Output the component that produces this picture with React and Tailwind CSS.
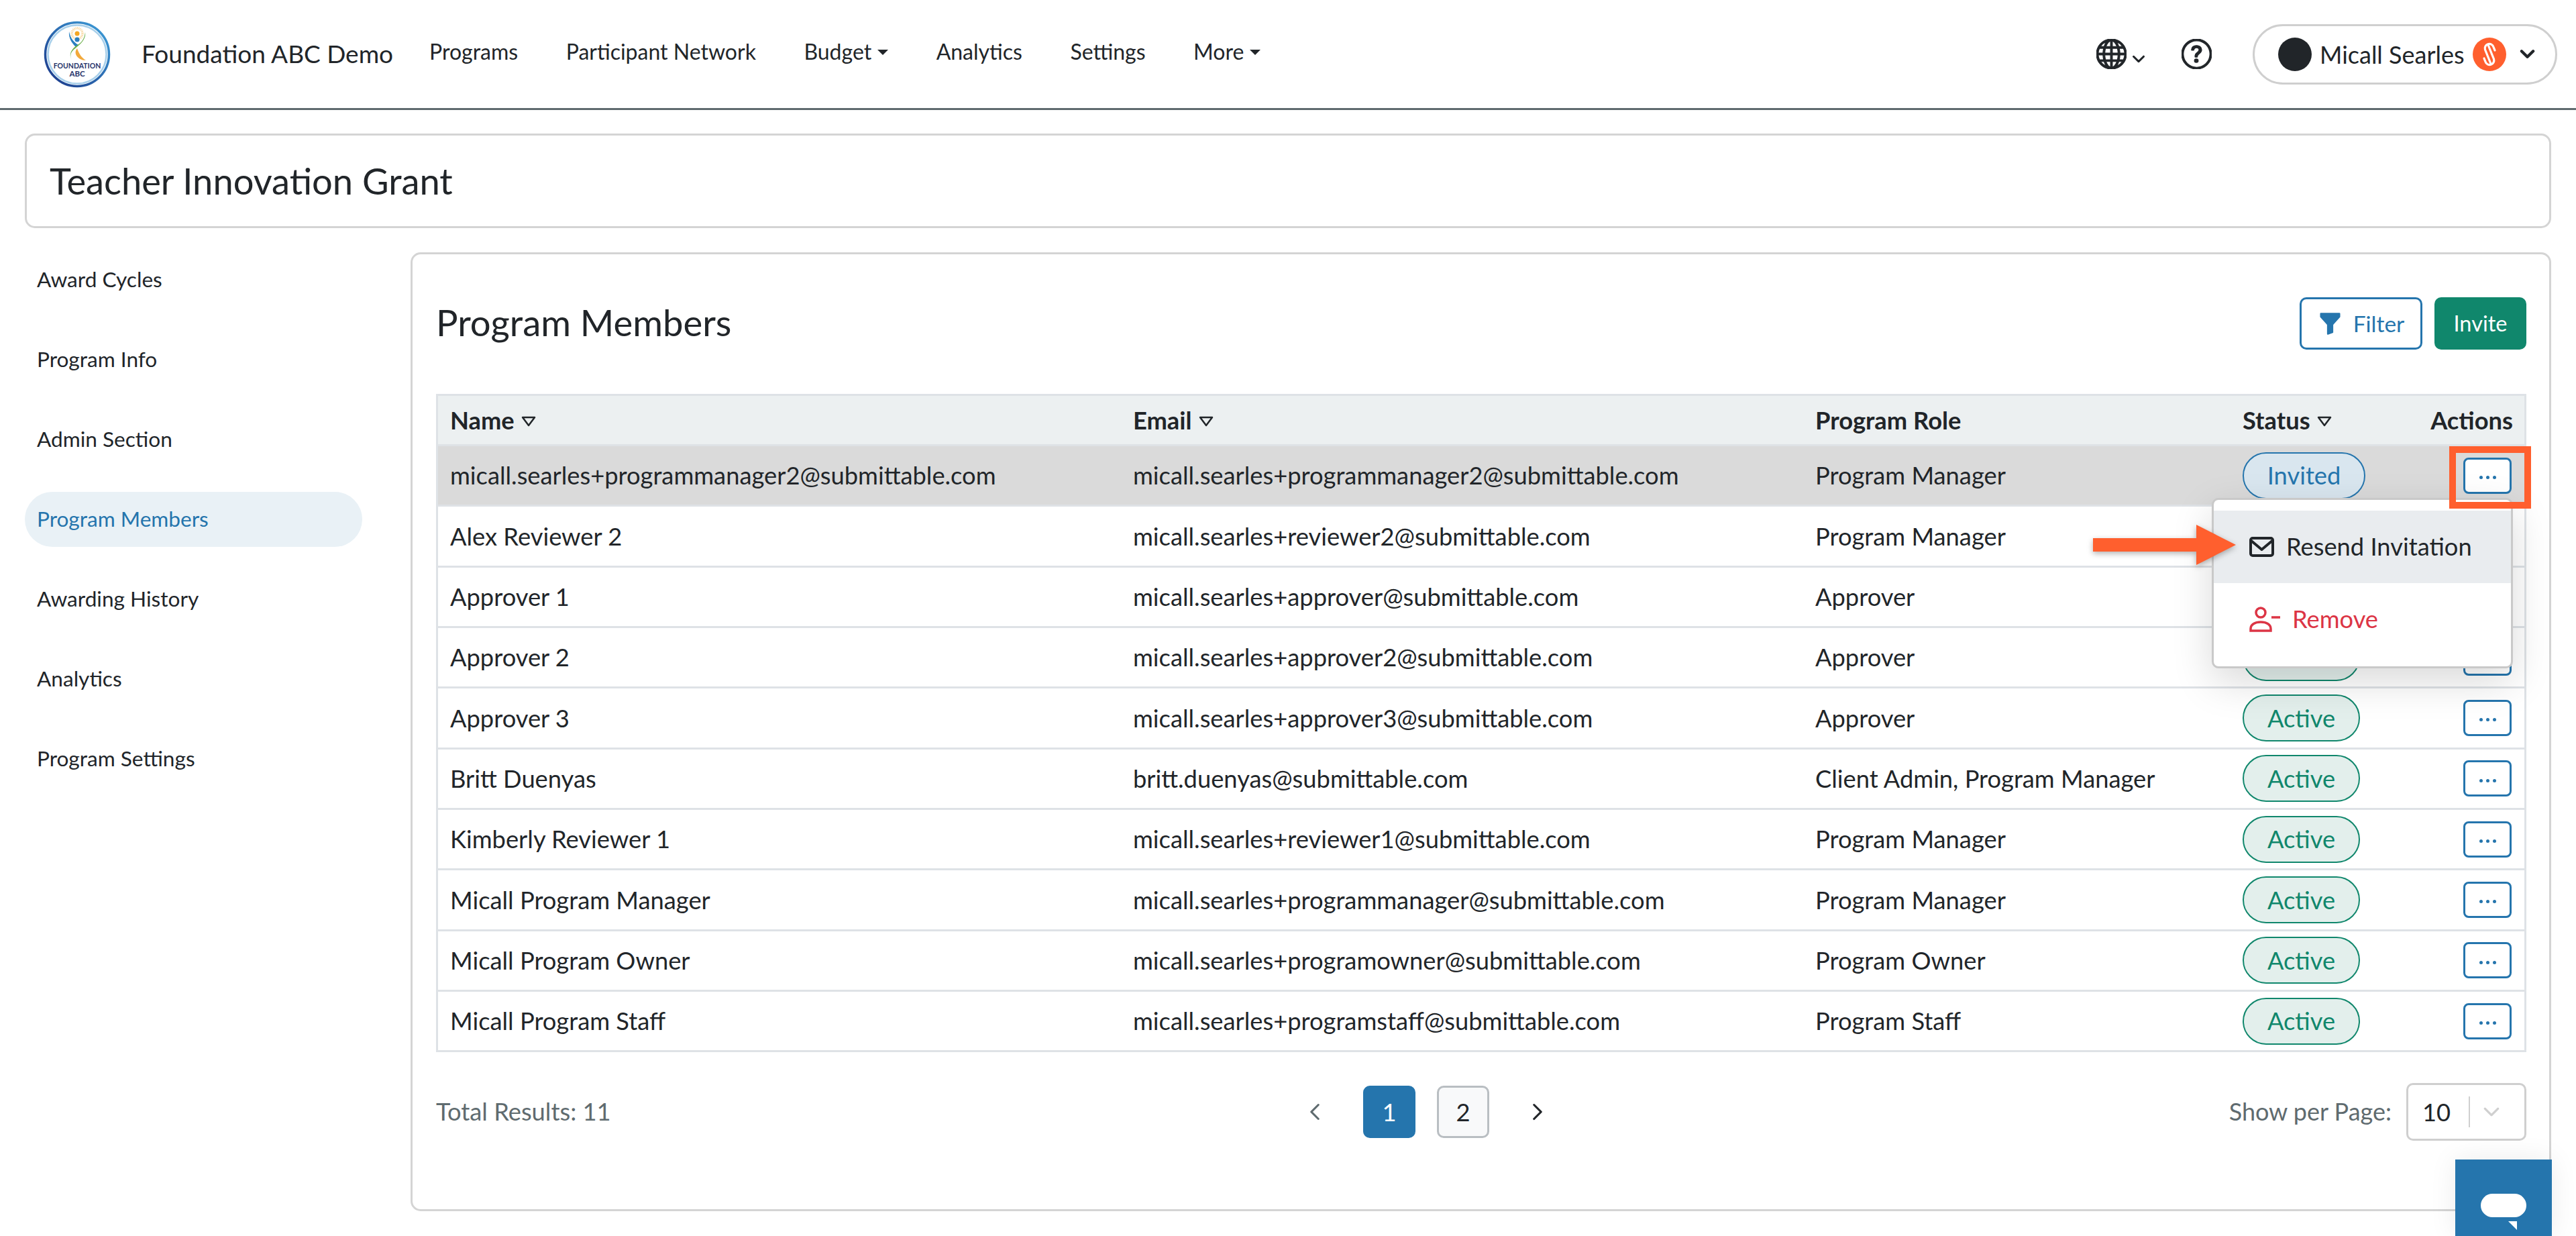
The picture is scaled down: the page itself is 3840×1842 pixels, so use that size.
import React from 'react';
import { BsGlobe, BsQuestionCircle, BsChevronDown, BsChevronLeft, BsChevronRight, BsFunnelFill } from 'react-icons/bs';

const sideLinks = ['Award Cycles', 'Program Info', 'Admin Section', 'Program Members', 'Awarding History', 'Analytics', 'Program Settings'];

const members = [
  ['micall.searles+programmanager2@submittable.com', 'micall.searles+programmanager2@submittable.com', 'Program Manager', 'Invited'],
  ['Alex Reviewer 2', 'micall.searles+reviewer2@submittable.com', 'Program Manager', 'Active'],
  ['Approver 1', 'micall.searles+approver@submittable.com', 'Approver', 'Active'],
  ['Approver 2', 'micall.searles+approver2@submittable.com', 'Approver', 'Active'],
  ['Approver 3', 'micall.searles+approver3@submittable.com', 'Approver', 'Active'],
  ['Britt Duenyas', 'britt.duenyas@submittable.com', 'Client Admin, Program Manager', 'Active'],
  ['Kimberly Reviewer 1', 'micall.searles+reviewer1@submittable.com', 'Program Manager', 'Active'],
  ['Micall Program Manager', 'micall.searles+programmanager@submittable.com', 'Program Manager', 'Active'],
  ['Micall Program Owner', 'micall.searles+programowner@submittable.com', 'Program Owner', 'Active'],
  ['Micall Program Staff', 'micall.searles+programstaff@submittable.com', 'Program Staff', 'Active'],
];

const columns = 'grid grid-cols-[1018px_1017px_637px_281px_1fr] items-center';

function SortIcon() {
  return (
    <svg width="22" height="16" viewBox="0 0 22 16" className="ml-[10px] mt-[3px]">
      <path d="M2 2h18l-9 12z" fill="none" stroke="#212529" strokeWidth="2.5" strokeLinejoin="round" />
    </svg>
  );
}

function Logo() {
  return (
    <svg width="100" height="100" viewBox="0 0 100 100" className="shrink-0">
      <defs>
        <linearGradient id="ring" x1="0.9" y1="0.1" x2="0.1" y2="0.9">
          <stop offset="0" stopColor="#3b97d3" />
          <stop offset="1" stopColor="#1d3f8f" />
        </linearGradient>
      </defs>
      <circle cx="50" cy="50" r="47.5" fill="none" stroke="url(#ring)" strokeWidth="3.5" />
      <circle cx="50" cy="50" r="43.5" fill="none" stroke="#a9d0ea" strokeWidth="2.5" />
      <circle cx="50" cy="19" r="3.5" fill="#f5a623" />
      <circle cx="50" cy="19" r="8" fill="none" stroke="#f8cf8a" strokeWidth="3.5" strokeDasharray="1 1.2" />
      <circle cx="50" cy="28" r="3.5" fill="#2a7fc0" />
      <path d="M38 16C37 26 42 33 48 39L52 36C45 32 40 26 38 16z" fill="#2a7fc0" />
      <path d="M50 41C53 50 57 55 63 59 56 59 52 56 49 52 47 48 47 45 50 41z" fill="#f2a93b" />
      <path d="M62 17C64 30 50 38 44 44 40 48 39 53 42 58 36 48 44 40 52 35 58 31 61 25 62 17z" fill="#6bb04a" />
      <text x="50" y="71" textAnchor="middle" fontSize="10.5" fontWeight="700" fill="#27346b" fontFamily="Lato, sans-serif">FOUNDATION</text>
      <text x="50" y="83" textAnchor="middle" fontSize="11.5" fontWeight="700" fill="#27346b" fontFamily="Lato, sans-serif">ABC</text>
    </svg>
  );
}

function BrandBadge() {
  return (
    <span className="w-[50px] h-[50px] rounded-full bg-[#ff5f2e] flex items-center justify-center">
      <svg width="22" height="38" viewBox="0 0 22 38" fill="none" stroke="#fff" strokeWidth="3.2" strokeLinecap="round">
        <path d="M13 33L4.5 12a6.5 6.5 0 0 1 12.5-4l2 5" />
        <path d="M9 5l8.5 21a6.5 6.5 0 0 1-12.5 4l-2-5" />
      </svg>
    </span>
  );
}

function Dots() {
  return (
    <button className="w-[72px] h-[54px] rounded-[8px] border-[3px] border-[#2575ad] bg-white flex items-center justify-center gap-[5px] pt-[6px]">
      <span className="w-[5px] h-[5px] rounded-full bg-[#2575ad]" />
      <span className="w-[5px] h-[5px] rounded-full bg-[#2575ad]" />
      <span className="w-[5px] h-[5px] rounded-full bg-[#2575ad]" />
    </button>
  );
}

function StatusPill({ status }) {
  if (status === 'Invited') {
    return (
      <span className="w-[183px] h-[70px] rounded-[35px] border-2 border-[#2575ad] bg-[#d9e6ef] text-[#2575ad] flex items-center justify-center">
        Invited
      </span>
    );
  }
  return (
    <span className="w-[175px] h-[70px] rounded-[35px] border-2 border-[#10876c] bg-[#e3efec] text-[#10876c] flex items-center justify-center">
      Active
    </span>
  );
}

function MemberRow({ member, index }) {
  const [name, email, role, status] = member;
  return (
    <div className={`${columns} h-[90.33px] border-b-[3px] border-[#dee2e6] ${index === 0 ? 'bg-[#dadada]' : 'bg-white'}`}>
      <div className="pl-[18px] whitespace-nowrap">{name}</div>
      <div className="pl-[18px] whitespace-nowrap">{email}</div>
      <div className="pl-[18px] whitespace-nowrap">{role}</div>
      <div className="pl-[18px]"><StatusPill status={status} /></div>
      <div className="flex justify-end pr-[19px]"><Dots /></div>
    </div>
  );
}

export default function App() {
  return (
    <div className="relative w-[3840px] h-[1842px] overflow-hidden bg-white text-[#212529] text-[36.3px] font-['Lato',sans-serif]">
      <header className="h-[164px] border-b-[3px] border-[#5f6b6f] flex items-center pl-[65px] pr-[28px]">
        <Logo />
        <span className="ml-[46px] text-[37px] mt-[-2px] whitespace-nowrap">Foundation ABC Demo</span>
        <nav className="flex items-center ml-[54px] mt-[-8px] gap-[71.5px] text-[32px]">
          <a>Programs</a>
          <a>Participant Network</a>
          <a className="flex items-center">Budget<span className="ml-[9px] mt-[3px] border-x-[8px] border-x-transparent border-t-[8px] border-t-[#212529]" /></a>
          <a>Analytics</a>
          <a>Settings</a>
          <a className="flex items-center">More<span className="ml-[9px] mt-[3px] border-x-[8px] border-x-transparent border-t-[8px] border-t-[#212529]" /></a>
        </nav>
        <div className="ml-auto flex items-center">
          <BsGlobe className="w-[45px] h-[45px]" strokeWidth="0.4" />
          <BsChevronDown className="w-[20px] h-[20px] ml-[8px] mt-[14px]" strokeWidth="1.5" />
          <BsQuestionCircle className="w-[45px] h-[45px] ml-[54px]" strokeWidth="0.4" />
          <div className="ml-[61px] w-[454px] h-[90px] rounded-[45px] border-[3px] border-[#cfcfcf] flex items-center pl-[35px]">
            <span className="w-[50px] h-[50px] rounded-full bg-[#212529]" />
            <span className="ml-[12px] text-[36px] whitespace-nowrap">Micall Searles</span>
            <span className="ml-[12px]"><BrandBadge /></span>
            <BsChevronDown className="w-[23px] h-[23px] ml-[20px]" strokeWidth="2" />
          </div>
        </div>
      </header>

      <div className="px-[37px]">
        <div className="mt-[35px] h-[141px] rounded-[15px] border-[3px] border-[#d4d4d4] flex items-center pl-[34px] text-[54.25px]">
          Teacher Innovation Grant
        </div>

        <div className="mt-[36px] flex">
          <aside className="w-[503px] flex flex-col gap-[37px] text-[31.6px]">
            {sideLinks.map((link) => (
              <div key={link} className={`h-[82px] rounded-[41px] flex items-center pl-[18px] ${link === 'Program Members' ? 'bg-[#e9f1f6] text-[#2575ad]' : ''}`}>
                {link}
              </div>
            ))}
          </aside>

          <main className="ml-[72px] w-[3191px] h-[1429px] rounded-[15px] border-[3px] border-[#d4d4d4] pl-[35px] pr-[34px] pt-[64px]">
            <div className="flex items-center h-[78px]">
              <h1 className="text-[54.4px] mt-[-2px]">Program Members</h1>
              <button className="ml-auto w-[183px] h-[78px] rounded-[10px] border-[3px] border-[#2575ad] text-[#2575ad] text-[33.5px] flex items-center justify-center gap-[16px]">
                <BsFunnelFill className="w-[37px] h-[37px]" />
                Filter
              </button>
              <button className="ml-[18px] w-[137px] h-[78px] rounded-[10px] bg-[#10876c] text-white text-[32.5px] flex items-center justify-center">
                Invite
              </button>
            </div>

            <div className="mt-[66px] border-x-[3px] border-[#dee2e6] w-[3116px]">
              <div className={`${columns} h-[78px] bg-[#ecf0f1] border-y-[3px] border-[#dee2e6] font-bold`}>
                <div className="pl-[18px] flex items-center">Name<SortIcon /></div>
                <div className="pl-[18px] flex items-center">Email<SortIcon /></div>
                <div className="pl-[18px]">Program Role</div>
                <div className="pl-[18px] flex items-center">Status<SortIcon /></div>
                <div className="text-right pr-[17px]">Actions</div>
              </div>
              {members.map((member, i) => (
                <MemberRow key={i} member={member} index={i} />
              ))}
            </div>

            <div className="mt-[46px] flex items-center h-[86px] w-[3116px]">
              <span className="w-[1296px] text-[#5f6b6f] mt-[-2px]">Total Results: 11</span>
              <BsChevronLeft className="w-[28px] h-[28px] text-[#5f6b6f]" strokeWidth="0.8" />
              <span className="ml-[58px] w-[78px] h-[78px] rounded-[10px] bg-[#2575ad] text-white flex items-center justify-center">1</span>
              <span className="ml-[32px] w-[78px] h-[78px] rounded-[10px] bg-[#f8f9fa] border-[3px] border-[#b9bec2] flex items-center justify-center">2</span>
              <BsChevronRight className="ml-[58px] w-[28px] h-[28px]" strokeWidth="0.8" />
              <span className="ml-auto text-[#5f6b6f] text-[36px] mt-[-2px]">Show per Page:</span>
              <div className="ml-[22px] w-[179px] h-[86px] rounded-[10px] border-[3px] border-[#cfcfcf] flex items-center">
                <span className="w-[92px] pl-[21px] border-r-2 border-[#cfcfcf] leading-[46px]">10</span>
                <BsChevronDown className="ml-[19px] w-[26px] h-[26px] text-[#cfcfcf]" strokeWidth="1" />
              </div>
            </div>
          </main>
        </div>
      </div>

      {/* action menu */}
      <div className="absolute left-[3297px] top-[742px] w-[449px] h-[254px] bg-white rounded-[10px] border-[3px] border-[#c9c9c9] shadow-[0_20px_60px_rgba(0,0,0,0.15)] pt-[16px]">
        <div className="h-[108px] bg-[#e9ecef] flex items-center pl-[53px]">
          <svg width="37" height="30" viewBox="0 0 37 30" fill="none" stroke="#212529" strokeWidth="4" strokeLinejoin="round">
            <rect x="2" y="2" width="33" height="26" rx="3" />
            <path d="M3 6l15.5 13L34 6" />
          </svg>
          <span className="ml-[18px] mt-[-2px]">Resend Invitation</span>
        </div>
        <div className="h-[108px] flex items-center pl-[53px] text-[#dc3545]">
          <svg width="46" height="38" viewBox="0 0 46 38" fill="none" stroke="#dc3545" strokeWidth="3.5">
            <circle cx="17" cy="9" r="7" />
            <path d="M2 36v-3c0-6 6-10 15-10s15 4 15 10v3z" />
            <path d="M33 16h13" />
          </svg>
          <span className="ml-[18px] mt-[-2px]">Remove</span>
        </div>
      </div>

      {/* annotation */}
      <div className="absolute left-[3651px] top-[665px] w-[122px] h-[93px] border-[10px] border-[#ff5f2e]" />
      <svg width="213" height="60" viewBox="0 0 213 60" className="absolute left-[3120px] top-[782px] drop-shadow-[0_3px_4px_rgba(0,0,0,0.3)]">
        <path d="M0 20h154V0l59 30-59 30V40H0z" fill="#ff5f2e" />
      </svg>

      {/* chat launcher */}
      <div className="absolute left-[3660px] top-[1728px] w-[144px] h-[114px] bg-[#2575ad] flex justify-center pt-[51px] shadow-[0_0_40px_rgba(0,0,0,0.08)]">
        <svg width="68" height="54" viewBox="0 0 68 54" fill="#fff">
          <rect width="68" height="35" rx="17.5" />
          <path d="M41 41h13v13z" />
        </svg>
      </div>
    </div>
  );
}
